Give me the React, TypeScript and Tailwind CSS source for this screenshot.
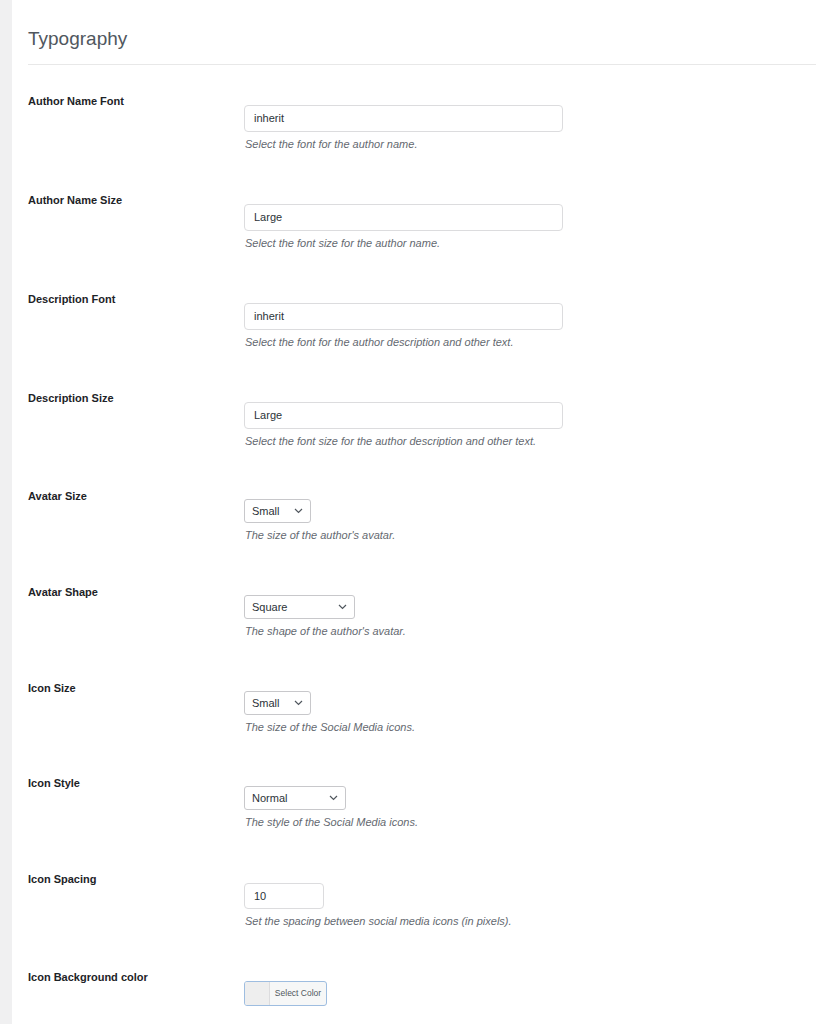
import type { ReactNode } from "react";

type Field =
  | { kind: "text"; value: string; width: number; h?: number }
  | { kind: "select"; value: string; width: number }
  | { kind: "color" };

type Row = { label: string; field: Field; hint?: string; tight?: boolean };

const rows: Row[] = [
  { label: "Author Name Font", field: { kind: "text", value: "inherit", width: 319 }, hint: "Select the font for the author name." },
  { label: "Author Name Size", field: { kind: "text", value: "Large", width: 319 }, hint: "Select the font size for the author name." },
  { label: "Description Font", field: { kind: "text", value: "inherit", width: 319 }, hint: "Select the font for the author description and other text." },
  { label: "Description Size", field: { kind: "text", value: "Large", width: 319 }, hint: "Select the font size for the author description and other text.", tight: true },
  { label: "Avatar Size", field: { kind: "select", value: "Small", width: 67 }, hint: "The size of the author's avatar." },
  { label: "Avatar Shape", field: { kind: "select", value: "Square", width: 111 }, hint: "The shape of the author's avatar." },
  { label: "Icon Size", field: { kind: "select", value: "Small", width: 67 }, hint: "The size of the Social Media icons.", tight: true },
  { label: "Icon Style", field: { kind: "select", value: "Normal", width: 102 }, hint: "The style of the Social Media icons." },
  { label: "Icon Spacing", field: { kind: "text", value: "10", width: 80, h: 26 }, hint: "Set the spacing between social media icons (in pixels)." },
  { label: "Icon Background color", field: { kind: "color" } },
];

function Chevron() {
  return (
    <svg width="9" height="6" viewBox="0 0 9 6" fill="none">
      <path d="M1 1l3.5 3.5L8 1" stroke="#50575e" strokeWidth="1.2" />
    </svg>
  );
}

function Control({ field }: { field: Field }): ReactNode {
  if (field.kind === "text") {
    return (
      <div
        className="flex items-center rounded-[4px] border border-[#dcdcde] bg-white pl-[9px] text-[11px] text-[#2c3338]"
        style={{ width: field.width, height: field.h ?? 27 }}
      >
        {field.value}
      </div>
    );
  }
  if (field.kind === "select") {
    return (
      <div
        className="flex h-[24px] items-center justify-between rounded-[3px] border border-[#c8c8cb] bg-white pl-[7px] pr-[7px] text-[11px] text-[#2c3338]"
        style={{ width: field.width }}
      >
        <span>{field.value}</span>
        <Chevron />
      </div>
    );
  }
  return (
    <div className="flex h-[25px] w-[83px] overflow-hidden rounded-[3px] border border-[#9ebde0] bg-[#f6f7f7]">
      <div className="w-[25px] border-r border-[#dcdcde] bg-[#eeeeee]" />
      <div className="flex flex-1 items-center justify-center text-[8.5px] text-[#50575e]">Select Color</div>
    </div>
  );
}

export default function App() {
  return (
    <div className="flex min-h-screen bg-white font-['Liberation_Sans',Arial,sans-serif]">
      <div className="w-3 shrink-0 bg-[#f0f0f1]" />
      <div className="flex-1 pl-4">
        <h2 className="pt-[27px] text-[19px] leading-[23px] text-[#50575e]">Typography</h2>
        <div className="mt-[14px] h-px bg-[#e8e8e8]" />
        <div className="mt-[13px]">
          {rows.map((r) => {
            const isSelect = r.field.kind === "select";
            // table rows in the original differ by a pixel here and there
            const pb = isSelect
              ? r.tight ? "pb-[26px]" : "pb-[27px]"
              : r.tight ? "pb-[25px]" : "pb-[26px]";
            return (
              <div key={r.label} className={`flex ${pb}`}>
                <div className="w-[216px] shrink-0 pt-4 text-[11px] font-bold leading-[14px] text-[#1d2327]">
                  {r.label}
                </div>
                <div className={isSelect ? "pt-[26px]" : "pt-[27px]"}>
                  <Control field={r.field} />
                  {r.hint && (
                    <p className="mt-[5px] pl-px text-[11px] italic leading-[14px] text-[#646970]">{r.hint}</p>
                  )}
                </div>
              </div>
            );
          })}
        </div>
      </div>
    </div>
  );
}
